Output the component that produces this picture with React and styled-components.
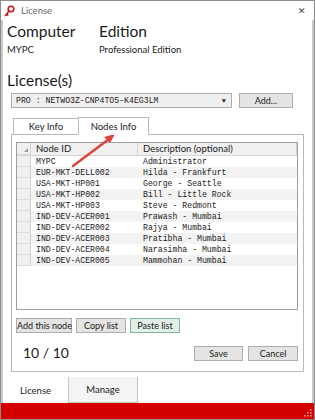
import React from "react";
import styled, { createGlobalStyle } from "styled-components";

const GlobalStyle = createGlobalStyle`
    html, body {
        margin: 0;
        padding: 0;
        background: #ffffff;
    }
    * {
        box-sizing: border-box;
    }
`;

const UI = `Lato, "Open Sans", sans-serif`;
const MONO = `"Liberation Mono", "DejaVu Sans Mono", monospace`;

const nodes = [
    ["MYPC", "Administrator"],
    ["EUR-MKT-DELL002", "Hilda - Frankfurt"],
    ["USA-MKT-HP001", "George - Seattle"],
    ["USA-MKT-HP002", "Bill - Little Rock"],
    ["USA-MKT-HP003", "Steve - Redmont"],
    ["IND-DEV-ACER001", "Prawash - Mumbai"],
    ["IND-DEV-ACER002", "Rajya - Mumbai"],
    ["IND-DEV-ACER003", "Pratibha - Mumbai"],
    ["IND-DEV-ACER004", "Narasimha - Mumbai"],
    ["IND-DEV-ACER005", "Mammohan - Mumbai"],
];

const Window = styled.div`
    position: relative;
    width: 315px;
    height: 420px;
    border: 1px solid #8c8c8c;
    display: flex;
    flex-direction: column;
    background: #fff;
    font-family: ${UI};
    color: #1e1e1e;
    overflow: hidden;
`;

const TitleBar = styled.div`
    height: 19px;
    display: flex;
    align-items: center;
    padding: 0 8px 0 3px;
    flex-shrink: 0;
`;

const TitleText = styled.span`
    font-size: 9.5px;
    color: #6a6a6a;
    margin-left: 6px;
    flex: 1;
`;

const CloseGlyph = styled.span`
    font-size: 9px;
    color: #444;
    line-height: 1;
`;

const Body = styled.div`
    flex: 1;
    display: flex;
    flex-direction: column;
    border-left: 2px solid #c9c9c9;
    border-right: 2px solid #c9c9c9;
    padding: 0 9px 0 8px;
`;

const InfoRow = styled.div`
    display: flex;
    margin-left: -4px;
    margin-top: 1px;
`;

const InfoCol = styled.div`
    width: ${(p) => p.$w}px;
    display: flex;
    flex-direction: column;
`;

const BigLabel = styled.div`
    font-size: 15.5px;
    line-height: 20px;
    color: #1a1a1a;
`;

const SmallValue = styled.div`
    font-size: 9.5px;
    line-height: 12px;
    margin-top: 3px;
    color: #1a1a1a;
`;

const SectionLabel = styled(BigLabel)`
    margin-top: 14px;
    margin-left: -4px;
`;

const ComboRow = styled.div`
    display: flex;
    align-items: center;
    gap: 7px;
    margin-top: 3px;
`;

const Combo = styled.div`
    width: 221px;
    height: 15px;
    border: 1px solid #acacac;
    background: #efefef;
    display: flex;
    align-items: center;
    padding: 0 5px 0 4px;
    font-family: ${MONO};
    font-size: 8.2px;
    color: #222;
`;

const ComboText = styled.span`
    flex: 1;
    white-space: pre;
`;

const ComboArrow = styled.span`
    font-size: 7px;
    color: #333;
`;

const Button = styled.button`
    width: ${(p) => p.$w}px;
    height: ${(p) => p.$h || 15}px;
    padding: 0;
    border: 1px solid ${(p) => (p.$focus ? "#7fb79c" : "#adadad")};
    background: ${(p) => (p.$focus ? "#e3f0e8" : "#e4e4e4")};
    font-family: ${UI};
    font-size: 9px;
    color: #1a1a1a;
    cursor: pointer;
    line-height: 1;
    white-space: nowrap;
`;

const TabStrip = styled.div`
    display: flex;
    align-items: flex-end;
    margin-top: 9px;
    padding-left: 2px;
    height: 18px;
    position: relative;
    z-index: 1;
    margin-bottom: -1px;
`;

const Tab = styled.div`
    width: ${(p) => p.$w}px;
    height: ${(p) => (p.$active ? 18 : 17)}px;
    border: 1px solid #b9b9b9;
    border-bottom: ${(p) => (p.$active ? "1px solid #fff" : "1px solid #b9b9b9")};
    margin-left: ${(p) => (p.$first ? 0 : -1)}px;
    background: #fff;
    display: flex;
    align-items: center;
    justify-content: center;
    font-size: 9.5px;
    color: #1a1a1a;
`;

const Panel = styled.div`
    border: 1px solid #b9b9b9;
    width: 293px;
    padding: 7px 5px 10px 4px;
    display: flex;
    flex-direction: column;
`;

const Grid = styled.div`
    height: 168px;
    border: 1px solid #9e9e9e;
    background: #fff;
    display: flex;
    flex-direction: column;
`;

const GridRow = styled.div`
    display: grid;
    grid-template-columns: 14px 107px 1fr;
    height: ${(p) => (p.$head ? 13 : 11)}px;
    background: ${(p) => (p.$head ? "#f0f0f0" : p.$alt ? "#f3f3f3" : "#fff")};
    border-bottom: ${(p) => (p.$head ? "1px solid #d5d5d5" : "none")};
`;

const RowHead = styled.div`
    background: #f0f0f0;
    border-right: 1px solid #d0d0d0;
    border-bottom: 1px solid #dcdcdc;
    position: relative;
`;

const CornerMark = styled.span`
    position: absolute;
    right: 2px;
    bottom: 2px;
    width: 0;
    height: 0;
    border-left: 4px solid transparent;
    border-bottom: 4px solid #9a9a9a;
`;

const HeadCell = styled.div`
    font-size: 9.5px;
    line-height: 12px;
    padding-left: 5px;
    border-right: 1px solid #d0d0d0;
    color: #1a1a1a;
`;

const Cell = styled.div`
    font-family: ${MONO};
    font-size: 8.2px;
    line-height: 11px;
    padding-left: 5px;
    color: #222;
    white-space: pre;
`;

const ButtonRow = styled.div`
    display: flex;
    gap: 4px;
    margin-top: 8px;
`;

const FooterRow = styled.div`
    display: flex;
    align-items: center;
    margin-top: 12px;
    gap: 5px;
`;

const Count = styled.div`
    font-size: 14px;
    line-height: 16px;
    margin-left: 7px;
    flex: 1;
    color: #1a1a1a;
`;

const BottomTabs = styled.div`
    display: flex;
    margin-top: auto;
    margin-left: -8px;
    height: 26px;
`;

const BottomTab = styled.div`
    width: ${(p) => p.$w}px;
    display: flex;
    align-items: center;
    justify-content: center;
    font-size: 9.5px;
    color: #1a1a1a;
    background: ${(p) => (p.$active ? "#fff" : "#f4f4f4")};
    border-right: 1px solid #c4c4c4;
    border-bottom: ${(p) => (p.$active ? "none" : "1px solid #c4c4c4")};
`;

const StatusBar = styled.div`
    height: 16px;
    background: #d40000;
    flex-shrink: 0;
    position: relative;
`;

const Grip = styled.svg`
    position: absolute;
    right: 2px;
    bottom: 2px;
`;

const Arrow = styled.svg`
    position: absolute;
    left: 0;
    top: 0;
    pointer-events: none;
`;

const KeyIcon = () => (
    <svg width="11" height="12" viewBox="0 0 11 12">
        <circle cx="7" cy="4" r="2.8" fill="none" stroke="#c4161c" strokeWidth="1.6" />
        <path d="M5 6 L1.5 10.5 M2.6 9.2 L3.8 10.2" stroke="#c4161c" strokeWidth="1.6" strokeLinecap="round" fill="none" />
    </svg>
);

export default function App() {
    return (
        <>
            <GlobalStyle />
            <Window>
                <TitleBar>
                    <KeyIcon />
                    <TitleText>License</TitleText>
                    <CloseGlyph>✕</CloseGlyph>
                </TitleBar>
                <Body>
                    <InfoRow>
                        <InfoCol $w={92}>
                            <BigLabel>Computer</BigLabel>
                            <SmallValue>MYPC</SmallValue>
                        </InfoCol>
                        <InfoCol $w={120}>
                            <BigLabel>Edition</BigLabel>
                            <SmallValue>Professional Edition</SmallValue>
                        </InfoCol>
                    </InfoRow>

                    <SectionLabel>License(s)</SectionLabel>
                    <ComboRow>
                        <Combo>
                            <ComboText>PRO : NETWO3Z-CNP4TO5-K4EG3LM</ComboText>
                            <ComboArrow>▼</ComboArrow>
                        </Combo>
                        <Button $w={54}>Add...</Button>
                    </ComboRow>

                    <TabStrip>
                        <Tab $w={66} $first>Key Info</Tab>
                        <Tab $w={71} $active>Nodes Info</Tab>
                    </TabStrip>
                    <Panel>
                        <Grid>
                            <GridRow $head>
                                <RowHead><CornerMark /></RowHead>
                                <HeadCell>Node ID</HeadCell>
                                <HeadCell>Description (optional)</HeadCell>
                            </GridRow>
                            {nodes.map(([id, desc], i) => (
                                <GridRow key={id} $alt={i % 2 === 1}>
                                    <RowHead />
                                    <Cell>{id}</Cell>
                                    <Cell>{desc}</Cell>
                                </GridRow>
                            ))}
                        </Grid>
                        <ButtonRow>
                            <Button $w={56}>Add this node</Button>
                            <Button $w={50}>Copy list</Button>
                            <Button $w={50} $focus>Paste list</Button>
                        </ButtonRow>
                        <FooterRow>
                            <Count>10 / 10</Count>
                            <Button $w={49}>Save</Button>
                            <Button $w={50}>Cancel</Button>
                        </FooterRow>
                    </Panel>

                    <BottomTabs>
                        <BottomTab $w={66} $active>License</BottomTab>
                        <BottomTab $w={69}>Manage</BottomTab>
                    </BottomTabs>
                </Body>
                <StatusBar>
                    <Grip width="9" height="9" viewBox="0 0 9 9">
                        {[[7, 1], [4, 4], [7, 4], [1, 7], [4, 7], [7, 7]].map(([x, y]) => (
                            <rect key={`${x}-${y}`} x={x} y={y} width="1.5" height="1.5" fill="#f3b0b0" />
                        ))}
                    </Grip>
                </StatusBar>
                <Arrow width="315" height="420" viewBox="0 0 315 420">
                    <line x1="72" y1="165" x2="108" y2="138" stroke="#dc4437" strokeWidth="2.4" strokeLinecap="round" />
                    <polygon points="114,133 103,136 109,142" fill="#dc4437" />
                </Arrow>
            </Window>
        </>
    );
}
